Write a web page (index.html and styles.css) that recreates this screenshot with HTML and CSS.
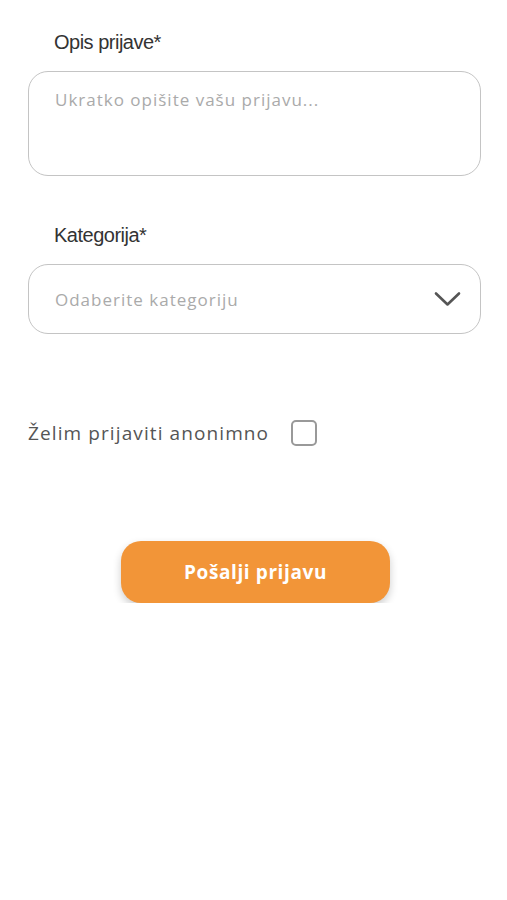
FILE: index.html
```html
<!DOCTYPE html>
<html lang="hr">
<head>
  <meta charset="UTF-8" />
  <meta name="viewport" content="width=device-width, initial-scale=1.0"/>
  <title>Nova prijava</title>
  <link rel="stylesheet" href="styles.css">
</head>
<body>
  <form class="report-form">
    <!-- Opis -->
    <label class="field-label" for="opis">Opis prijave*</label>
    <textarea id="opis" class="field-box field-textarea" placeholder="Ukratko opišite vašu prijavu..."></textarea>

    <!-- Kategorija -->
    <label class="field-label label-second">Kategorija*</label>
    <div class="field-box field-select">
      <span class="select-placeholder">Odaberite kategoriju</span>
      <svg class="chevron" width="27" height="16" viewBox="0 0 27 16">
        <path d="M2 2.5 L13.5 13.5 L25 2.5" fill="none" stroke="#555" stroke-width="2.6" stroke-linecap="round" stroke-linejoin="round"/>
      </svg>
    </div>

    <!-- Anonimno -->
    <div class="anon-row">
      <span class="anon-text">Želim prijaviti anonimno</span>
      <span class="checkbox"></span>
    </div>

    <div class="submit-wrap">
      <button type="button" class="submit-btn">Pošalji prijavu</button>
    </div>
  </form>
</body>
</html>
```

FILE: styles.css
```css
body {
  margin: 0;
  background: #ffffff;
  font-family: "Liberation Sans", Arial, sans-serif;
}

.report-form {
  display: flex;
  flex-direction: column;
  padding: 31px 26px 0 28px;
}

.field-label {
  display: block;
  padding-left: 26px;
  font-size: 20px;
  line-height: 22px;
  color: #333;
  letter-spacing: -0.5px;
  margin-bottom: 18px;
}

.label-second {
  margin-top: 48px;
  margin-bottom: 18px;
}

.field-box {
  box-sizing: border-box;
  width: 100%;
  border: 1px solid #c4c4c4;
  border-radius: 20px;
  background: #fff;
}

.field-textarea {
  display: block;
  height: 105px;
  padding: 17px 26px;
  resize: none;
  font-family: "Open Sans", sans-serif;
  font-size: 17px;
  letter-spacing: 1px;
  line-height: 22px;
  color: #333;
  outline: none;
}

.field-textarea::placeholder {
  color: #aaa;
}

.field-select {
  height: 70px;
  display: flex;
  align-items: center;
  justify-content: space-between;
  padding: 0 19px 0 26px;
}

.select-placeholder {
  font-family: "Open Sans", sans-serif;
  font-size: 17px;
  letter-spacing: 1px;
  color: #aaa;
}

.anon-row {
  display: flex;
  align-items: center;
  margin-top: 86px;
}

.anon-text {
  font-family: "Open Sans", sans-serif;
  font-size: 19px;
  letter-spacing: 1.1px;
  color: #555;
}

.checkbox {
  box-sizing: border-box;
  width: 26px;
  height: 26px;
  margin-left: 22px;
  border: 2px solid #999;
  border-radius: 5px;
}

.submit-wrap {
  display: flex;
  justify-content: center;
  margin-top: 95px;
}

.submit-btn {
  width: 269px;
  height: 62px;
  margin-left: 2px;
  border: none;
  border-radius: 20px;
  background: #f29538;
  color: #fff;
  font-family: "Open Sans", sans-serif;
  font-weight: 700;
  font-size: 19px;
  letter-spacing: 0.6px;
  box-shadow: 0 4px 8px rgba(0, 0, 0, 0.2);
  cursor: pointer;
}
```
